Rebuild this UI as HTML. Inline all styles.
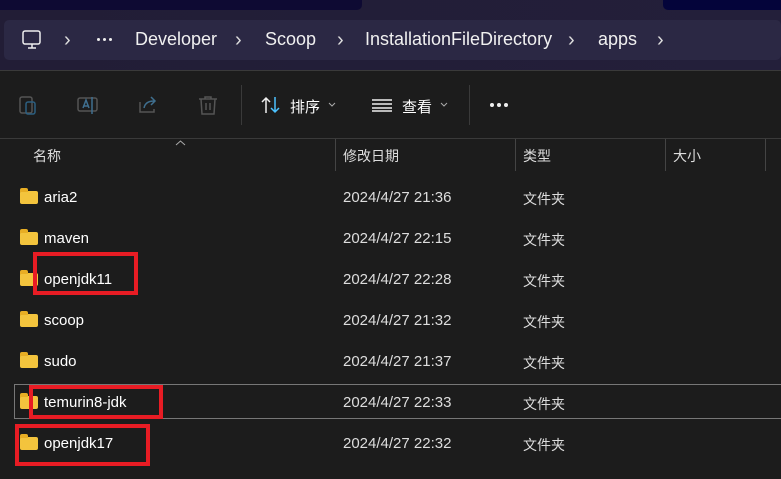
<!DOCTYPE html>
<html><head><meta charset="utf-8"><style>
body{margin:0;width:781px;height:479px;overflow:hidden;background:#1c1c1c;font-family:"Segoe UI","Liberation Sans","Noto Sans CJK SC",sans-serif;color:#fff;position:relative}
.a{position:absolute}
.top{left:0;top:0;width:781px;height:70px;background:linear-gradient(90deg,#221d36,#231f3a)}
.bar{left:4px;top:20px;width:777px;height:40px;background:#2b2844;border-radius:5px}
.crumb{top:29px;font-size:18px;color:#f0f0f0}
.sep{top:29px;font-size:20px;color:#ddd}
.tl{left:0;top:70px;width:781px;height:1px;background:#3a3a3a}
.hl{left:0;top:138px;width:781px;height:1px;background:#3a3a3a}
.hd{top:146px;font-size:14px;color:#ddd}
.vd{top:139px;width:1px;height:32px;background:#444}
.nm{left:44px;font-size:15px;color:#fff}
.dt{left:343px;font-size:15px;color:#ddd}
.ty{left:523px;font-size:14px;color:#ddd}
.fd{left:20px;width:18px;height:13px;background:#f3c43d;border-radius:2px}
.fd:before{content:"";position:absolute;left:0;top:-3px;width:8px;height:4px;background:#e8ae24;border-radius:2px 2px 0 0}
.red{border:4px solid #e81c24;box-sizing:border-box}
</style></head><body>
<div class="a top"></div>
<div class="a" style="left:0;top:0;width:362px;height:10px;background:#0e0a33;border-radius:0 0 5px 0"></div>
<div class="a" style="left:663px;top:0;width:118px;height:10px;background:#04043a;border-radius:0 0 0 5px"></div>
<div class="a bar"></div>
<svg class="a" style="left:21px;top:29px" width="22" height="22" viewBox="0 0 22 22" fill="none" stroke="#eee" stroke-width="1.5"><rect x="2" y="2" width="17" height="13" rx="2"/><path d="M7 19h8M11 15v4"/></svg>
<div class="a sep" style="left:64px">›</div>
<div class="a" style="left:97px;top:38px;width:3px;height:3px;background:#eee;border-radius:2px;box-shadow:6px 0 #eee,12px 0 #eee"></div>
<div class="a crumb" style="left:135px">Developer</div>
<div class="a sep" style="left:235px">›</div>
<div class="a crumb" style="left:265px">Scoop</div>
<div class="a sep" style="left:337px">›</div>
<div class="a crumb" style="left:365px">InstallationFileDirectory</div>
<div class="a sep" style="left:568px">›</div>
<div class="a crumb" style="left:598px">apps</div>
<div class="a sep" style="left:657px">›</div>
<div class="a tl"></div>
<svg class="a" style="left:18px;top:94px" width="22" height="22" viewBox="0 0 22 22" fill="none" stroke="#555" stroke-width="1.5"><rect x="2" y="3" width="12" height="16" rx="2"/><rect x="8" y="8" width="9" height="12" rx="2" stroke="#2c5f80"/></svg>
<svg class="a" style="left:77px;top:94px" width="22" height="22" viewBox="0 0 22 22" fill="none" stroke="#555" stroke-width="1.5"><rect x="1" y="4" width="19" height="13" rx="2"/><path d="M6 14l3-8 3 8M7 12h4M15 3v17" stroke="#3f6f8f"/></svg>
<svg class="a" style="left:137px;top:94px" width="22" height="22" viewBox="0 0 22 22" fill="none" stroke="#555" stroke-width="1.5"><path d="M3 8v10h14v-3"/><path d="M7 14c1-5 5-7 10-7M14 3l4 4-4 4" stroke="#3f6f8f"/></svg>
<svg class="a" style="left:197px;top:94px" width="22" height="22" viewBox="0 0 22 22" fill="none" stroke="#555" stroke-width="1.5"><path d="M2 5h18M8 5V3h6v2M4 5l1 15h12l1-15M9 9v7M13 9v7"/></svg>
<div class="a" style="left:241px;top:85px;width:1px;height:40px;background:#3a3a3a"></div>
<svg class="a" style="left:260px;top:95px" width="22" height="20" viewBox="0 0 22 20" fill="none" stroke-width="1.5"><path d="M6 18V3M2 7l4-4 4 4" stroke="#eee"/><path d="M15 2v15M11 13l4 4 4-4" stroke="#4cc2ff"/></svg>
<div class="a" style="left:290px;top:96px;font-size:15px">排序</div>
<svg class="a" style="left:328px;top:102px" width="8" height="6" viewBox="0 0 8 6" fill="none" stroke="#aaa"><path d="M1 1l3 3 3-3"/></svg>
<svg class="a" style="left:372px;top:98px" width="20" height="14" viewBox="0 0 20 14" stroke="#eee" stroke-width="1.5"><path d="M0 2h20M0 6h20M0 10h20M0 13h20"/></svg>
<div class="a" style="left:402px;top:96px;font-size:15px">查看</div>
<svg class="a" style="left:440px;top:102px" width="8" height="6" viewBox="0 0 8 6" fill="none" stroke="#aaa"><path d="M1 1l3 3 3-3"/></svg>
<div class="a" style="left:469px;top:85px;width:1px;height:40px;background:#3a3a3a"></div>
<div class="a" style="left:490px;top:103px;width:4px;height:4px;background:#eee;border-radius:2px;box-shadow:7px 0 #eee,14px 0 #eee"></div>
<div class="a hl"></div>
<svg class="a" style="left:175px;top:140px" width="11" height="6" viewBox="0 0 11 6" fill="none" stroke="#aaa"><path d="M1 5l4.5-4 4.5 4"/></svg>
<div class="a hd" style="left:33px">名称</div>
<div class="a hd" style="left:343px">修改日期</div>
<div class="a hd" style="left:523px">类型</div>
<div class="a hd" style="left:673px">大小</div>
<div class="a vd" style="left:335px"></div><div class="a vd" style="left:515px"></div><div class="a vd" style="left:665px"></div><div class="a vd" style="left:765px"></div>

<div class="a" style="left:14px;top:384px;width:770px;height:35px;border:1px solid #777;box-sizing:border-box"></div>

<div class="a fd" style="top:191px"></div><div class="a nm" style="top:189px">aria2</div><div class="a dt" style="top:189px">2024/4/27 21:36</div><div class="a ty" style="top:189px">文件夹</div>
<div class="a fd" style="top:232px"></div><div class="a nm" style="top:230px">maven</div><div class="a dt" style="top:230px">2024/4/27 22:15</div><div class="a ty" style="top:230px">文件夹</div>
<div class="a fd" style="top:273px"></div><div class="a nm" style="top:271px">openjdk11</div><div class="a dt" style="top:271px">2024/4/27 22:28</div><div class="a ty" style="top:271px">文件夹</div>
<div class="a fd" style="top:314px"></div><div class="a nm" style="top:312px">scoop</div><div class="a dt" style="top:312px">2024/4/27 21:32</div><div class="a ty" style="top:312px">文件夹</div>
<div class="a fd" style="top:355px"></div><div class="a nm" style="top:353px">sudo</div><div class="a dt" style="top:353px">2024/4/27 21:37</div><div class="a ty" style="top:353px">文件夹</div>
<div class="a fd" style="top:396px"></div><div class="a nm" style="top:394px">temurin8-jdk</div><div class="a dt" style="top:394px">2024/4/27 22:33</div><div class="a ty" style="top:394px">文件夹</div>
<div class="a fd" style="top:437px"></div><div class="a nm" style="top:435px">openjdk17</div><div class="a dt" style="top:435px">2024/4/27 22:32</div><div class="a ty" style="top:435px">文件夹</div>

<div class="a red" style="left:33px;top:252px;width:105px;height:43px"></div>
<div class="a red" style="left:29px;top:385px;width:134px;height:34px"></div>
<div class="a red" style="left:15px;top:424px;width:135px;height:42px"></div>
</body></html>
